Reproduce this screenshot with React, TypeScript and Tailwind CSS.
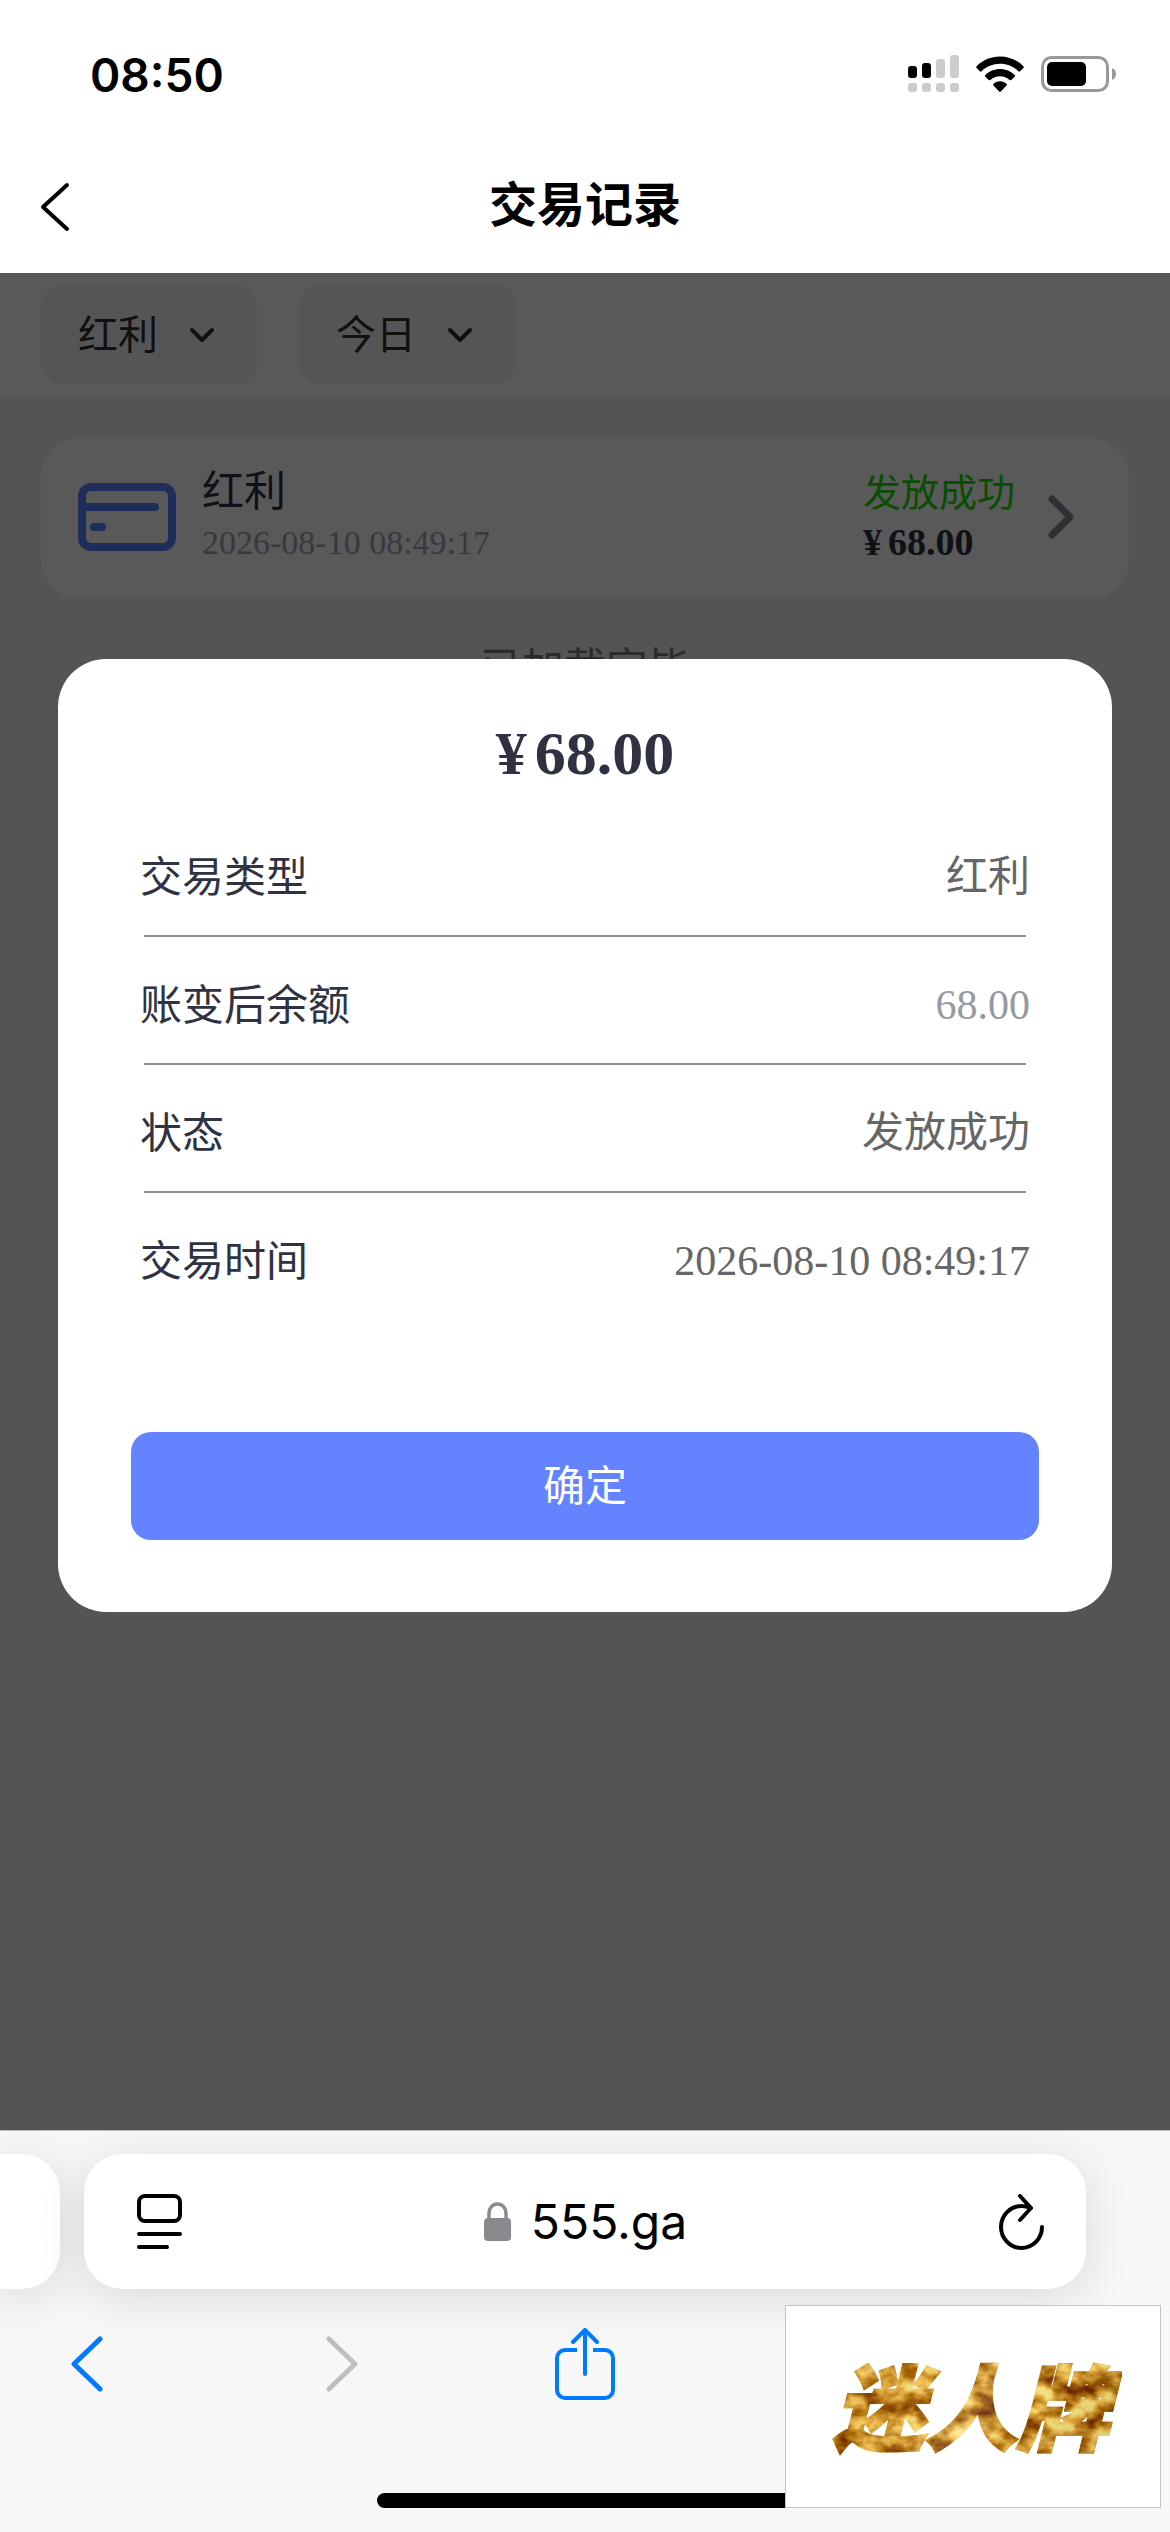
import { useState } from 'react'

const SANS = "font-['Inter','Noto_Sans_CJK_SC',sans-serif]"
const SERIF = "font-['Liberation_Serif','Noto_Sans_CJK_SC',serif]"

const FILTERS = [
  { id: 'type', label: '交易类型', options: ['红利', '存款', '取款'] },
  { id: 'date', label: '日期', options: ['今日', '昨日', '近7日'] },
]

const RECORD = {
  type: '红利',
  time: '2026-08-10 08:49:17',
  status: '发放成功',
  amount: '68.00',
  balance: '68.00',
}

const DETAILS = [
  { label: '交易类型', value: RECORD.type, color: 'text-[#666666]' },
  { label: '账变后余额', value: RECORD.balance, color: 'text-[#9499a3]' },
  { label: '状态', value: RECORD.status, color: 'text-[#666666]' },
  { label: '交易时间', value: RECORD.time, color: 'text-[#666666]' },
]

function StatusBar() {
  return (
    <div className="flex h-[141px] items-start justify-between bg-white pr-[54px] pl-[90px] pt-[50px]">
      <span className="text-[46px] leading-[50px] font-semibold text-black">08:50</span>
      <div className="flex items-center gap-[17px] pt-[5px]">
        {/* Señal dual SIM */}
        <svg width="51" height="38" viewBox="0 0 51 38" aria-hidden="true">
          <rect x="0" y="11" width="9" height="12" rx="3" fill="#000" />
          <rect x="14" y="8" width="9" height="15" rx="3" fill="#000" />
          <rect x="28" y="4" width="9" height="19" rx="3" fill="#ccc" />
          <rect x="42" y="0" width="9" height="23" rx="3" fill="#ccc" />
          <rect x="0" y="28" width="9" height="9" rx="3" fill="#ccc" />
          <rect x="14" y="28" width="9" height="9" rx="3" fill="#ccc" />
          <rect x="28" y="28" width="9" height="9" rx="3" fill="#ccc" />
          <rect x="42" y="28" width="9" height="9" rx="3" fill="#ccc" />
        </svg>
        <svg width="48" height="37" viewBox="0 0 48 37" aria-hidden="true">
          <path d="M24 0.5C14.8 0.5 6.500 4.200 0.600 10.200a1.200 1.200 0 0 0 0 1.700l3.300 3.300a1.200 1.200 0 0 0 1.700 0C10.400 10.600 16.900 7.800 24 7.800s13.600 2.800 18.400 7.400a1.200 1.200 0 0 0 1.700 0l3.300-3.300a1.200 1.200 0 0 0 0-1.700C41.500 4.200 33.200 0.500 24 0.500z" />
          <path d="M24 13c-5.700 0-10.900 2.300-14.700 6a1.200 1.200 0 0 0 0 1.700l3.400 3.300a1.200 1.200 0 0 0 1.600 0c2.600-2.400 5.900-3.800 9.700-3.800s7.100 1.400 9.700 3.800a1.200 1.200 0 0 0 1.600 0l3.400-3.300a1.200 1.200 0 0 0 0-1.700C34.900 15.300 29.700 13 24 13z" />
          <path d="M24 25.300c-2.500 0-4.800 0.900-6.500 2.400a1.100 1.100 0 0 0 0 1.700l5.700 6.200a1.100 1.100 0 0 0 1.600 0l5.700-6.200a1.100 1.100 0 0 0 0-1.700c-1.700-1.500-4-2.400-6.500-2.400z" />
        </svg>
        <svg width="75" height="37" viewBox="0 0 75 37" aria-hidden="true">
          <rect x="1.500" y="1.500" width="65" height="33" rx="9" fill="none" stroke="#999" strokeWidth="3" />
          <rect x="6" y="6" width="39" height="24" rx="5" fill="#000" />
          <path d="M71 12c2.600 1 4 3.300 4 6s-1.400 5-4 6z" fill="#999" />
        </svg>
      </div>
    </div>
  )
}

function Filter({ id, label, options }: { id: string; label: string; options: string[] }) {
  return (
    <div className="relative">
      <select
        id={id}
        aria-label={label}
        className="h-[99px] w-[216px] appearance-none rounded-[20px] bg-[#f4f4f8] pr-16 pl-[37px] text-[40px] leading-[60px] text-[#303030]"
      >
        {options.map(o => <option key={o}>{o}</option>)}
      </select>
      <svg className="pointer-events-none absolute top-[42px] right-[42px]" width="26" height="16" viewBox="0 0 26 16" fill="none" aria-hidden="true">
        <path d="M3 3l10 10L23 3" stroke="#303030" strokeWidth="4" strokeLinecap="round" strokeLinejoin="round" />
      </svg>
    </div>
  )
}

function RecordCard() {
  return (
    <button type="button" className="flex h-40 w-full items-center rounded-[38px] bg-white pr-[54px] pb-[2px] pl-[37px] text-left">
      <svg width="98" height="68" viewBox="0 0 98 68" fill="none" stroke="#5780ff" strokeWidth="8" strokeLinecap="round" aria-hidden="true">
        <rect x="4" y="4" width="90" height="60" rx="9" />
        <path d="M6 24h71M16 44h8" />
      </svg>
      <span className="ml-[26px] flex flex-1 flex-col">
        <span className="text-[42px] leading-[52px] text-[#2e3242]">{RECORD.type}</span>
        <span className={`${SERIF} text-[34px] leading-[52px] text-[#9fa3b1]`}>{RECORD.time}</span>
      </span>
      <span className="flex flex-col">
        <span className="text-[38px] leading-[50px] text-[#1cdc00]">{RECORD.status}</span>
        <span className={`${SERIF} flex gap-[6px] text-[38px] leading-[50px] font-bold text-[#2e3242]`}>
          <span>¥</span>
          <span>{RECORD.amount}</span>
        </span>
      </span>
      <svg className="ml-8" width="28" height="46" viewBox="0 0 28 46" fill="none" aria-hidden="true">
        <path d="M5 5l18 18L5 41" stroke="#888a98" strokeWidth="7" strokeLinecap="round" strokeLinejoin="round" />
      </svg>
    </button>
  )
}

function DetailDialog({ onClose }: { onClose: () => void }) {
  return (
    <div className="absolute inset-0 z-10 flex items-center justify-center bg-black/65 px-[58px]">
      <div role="dialog" aria-modal="true" aria-labelledby="amount" className="w-full rounded-[48px] bg-white px-[73px] pt-[58px] pb-[72px]">
        <h2 id="amount" className={`${SERIF} flex justify-center gap-2 text-[62px] leading-[72px] font-bold text-[#2e3242]`}>
          <span>¥</span>
          <span>{RECORD.amount}</span>
        </h2>
        <dl className="mt-5 px-[9px]">
          {DETAILS.map((d, i) => (
            <div key={d.label}>
              {i > 0 && <hr className="mx-1 border-t-2 border-[#8d9090]" />}
              <div className="flex h-[126px] items-center justify-between pt-[10px] text-[42px] leading-[60px]">
                <dt className="text-[#2e3242]">{d.label}</dt>
                <dd className={`${SERIF} ${d.color}`}>{d.value}</dd>
              </div>
            </div>
          ))}
        </dl>
        <button type="button" onClick={onClose} className="mt-[113px] h-[108px] w-full rounded-[20px] bg-[#6483ff] text-[42px] leading-[60px] text-white">
          确定
        </button>
      </div>
    </div>
  )
}

function AddressBar() {
  return (
    <div className="flex gap-6 pt-[23px]">
      <div className="h-[135px] w-[60px] rounded-r-[38px] bg-white shadow-[0_8px_48px_rgba(0,0,0,0.12)]" />
      <div className="mr-[84px] flex h-[135px] flex-1 items-center justify-between rounded-[38px] bg-white px-[42px] shadow-[0_8px_48px_rgba(0,0,0,0.12)]">
        <button type="button" aria-label="页面菜单" className="px-[11px]">
          <svg width="45" height="55" viewBox="0 0 45 55" fill="none" stroke="#000" strokeWidth="4" strokeLinecap="round">
            <rect x="2" y="2" width="41" height="25" rx="6" />
            <path d="M2 40h41M2 53h28" />
          </svg>
        </button>
        <button type="button" className="mr-5 flex items-center gap-5 text-[48px] leading-[60px] text-black">
          <svg width="27" height="39" viewBox="0 0 27 39" fill="none" aria-hidden="true">
            <rect x="0" y="16" width="27" height="23" rx="4" fill="#8a8a8e" />
            <path d="M5 18v-7a8.500 9 0 0 1 17 0v7" stroke="#8a8a8e" strokeWidth="3.500" />
          </svg>
          555.ga
        </button>
        <button type="button" aria-label="重新载入">
          <svg width="46" height="56" viewBox="0 0 46 56" fill="none" stroke="#000" strokeWidth="4" strokeLinecap="round" strokeLinejoin="round">
            <path d="M33 14C30 13 27 12 24 12A20.500 21 0 1 0 44 33M22 2l11 12-11 12" />
          </svg>
        </button>
      </div>
    </div>
  )
}

function Toolbar() {
  return (
    <div className="grid grid-cols-[122px_1fr_122px_1fr_122px] px-[26px] pt-[39px]">
      <button type="button" aria-label="后退" className="flex h-[72px] items-center justify-center">
        <svg width="32" height="56" viewBox="0 0 32 56" fill="none" stroke="#007aff" strokeWidth="5" strokeLinecap="round" strokeLinejoin="round">
          <path d="M29 3L3 28l26 25" />
        </svg>
      </button>
      <button type="button" aria-label="前进" className="flex h-[72px] items-center justify-center pl-3">
        <svg width="32" height="56" viewBox="0 0 32 56" fill="none" stroke="#bfbfbf" strokeWidth="5" strokeLinecap="round" strokeLinejoin="round">
          <path d="M3 3l26 25L3 53" />
        </svg>
      </button>
      <button type="button" aria-label="分享" className="flex h-[72px] items-center justify-center">
        <svg width="60" height="72" viewBox="0 0 60 72" fill="none" stroke="#007aff" strokeWidth="4" strokeLinejoin="round">
          <path d="M22 22H10a8 8 0 0 0-8 8v32a8 8 0 0 0 8 8h40a8 8 0 0 0 8-8V30a8 8 0 0 0-8-8H38" />
          <path d="M30 46V3M18 14L30 2l12 12" strokeLinecap="round" />
        </svg>
      </button>
    </div>
  )
}

function Watermark() {
  return (
    <div className="absolute right-[9px] bottom-[24px] flex h-[203px] w-[376px] items-center justify-center border border-[#c5c5c5] bg-white">
      <svg width="340" height="180" viewBox="0 0 340 180" role="img" aria-label="迷人牌">
        <defs>
          <linearGradient id="gold" x1="0" y1="0" x2="1" y2="0.4">
            <stop offset="0" stopColor="#a8700f" />
            <stop offset="0.180" stopColor="#e3b04a" />
            <stop offset="0.300" stopColor="#c07f0c" />
            <stop offset="0.500" stopColor="#dba233" />
            <stop offset="0.620" stopColor="#ecc97a" />
            <stop offset="0.800" stopColor="#c98f1e" />
            <stop offset="1" stopColor="#a06a10" />
          </linearGradient>
          {/* textura de pan de oro */}
          <filter id="foil" x="0" y="0" width="1" height="1" colorInterpolationFilters="sRGB">
            <feTurbulence type="fractalNoise" baseFrequency="0.035 0.05" numOctaves="4" seed="7" result="noise" />
            <feColorMatrix in="noise" type="matrix" values="1.800 0 0 0 -0.120  2.100 0 0 0 -0.480  1.900 0 0 0 -0.750  0 0 0 0 0.700" result="tint" />
            <feComposite in="tint" in2="SourceGraphic" operator="in" result="leaf" />
            <feMerge>
              <feMergeNode in="SourceGraphic" />
              <feMergeNode in="leaf" />
            </feMerge>
          </filter>
        </defs>
        <text
          x="168"
          y="126"
          textAnchor="middle"
          fill="url(#gold)"
          stroke="url(#gold)"
          strokeWidth="3"
          filter="url(#foil)"
          className="font-['Noto_Sans_CJK_SC',sans-serif] text-[92px] font-black italic"
        >
          迷人牌
        </text>
      </svg>
    </div>
  )
}

export default function App() {
  const [open, setOpen] = useState(true)

  return (
    <div className={`${SANS} relative flex min-h-screen flex-col overflow-hidden bg-[#f0f0f6]`}>
      <StatusBar />

      <div className="relative flex flex-1 flex-col">
        <header className="relative z-20 grid h-[132px] grid-cols-[1fr_auto_1fr] items-center bg-white px-[39px]">
          <button type="button" aria-label="返回" className="justify-self-start">
            <svg width="32" height="50" viewBox="0 0 32 50" fill="none" stroke="#000" strokeWidth="4" strokeLinecap="round" strokeLinejoin="round">
              <path d="M28 3L4 25l24 22" />
            </svg>
          </button>
          <h1 className="pb-1 text-[48px] leading-[70px] font-bold text-black">交易记录</h1>
        </header>

        <main className="flex-1">
          <div className="flex gap-[42px] bg-white px-[41px] pt-3 pb-[14px]">
            {FILTERS.map(f => <Filter key={f.id} {...f} />)}
          </div>
          <div className="px-[41px] pt-10">
            <RecordCard />
            <p className="mt-[40px] text-center text-[42px] leading-[60px] text-[#7b7b7b]">已加载完毕</p>
          </div>
        </main>

        {open && <DetailDialog onClose={() => setOpen(false)} />}
      </div>

      <footer className="relative z-20 overflow-hidden border-t border-[#b8b8b8] bg-[#f7f7f7] pb-6">
        <AddressBar />
        <Toolbar />
        <div className="mx-auto mt-[93px] h-[15px] w-[416px] rounded-full bg-black" />
        <Watermark />
      </footer>
    </div>
  )
}
